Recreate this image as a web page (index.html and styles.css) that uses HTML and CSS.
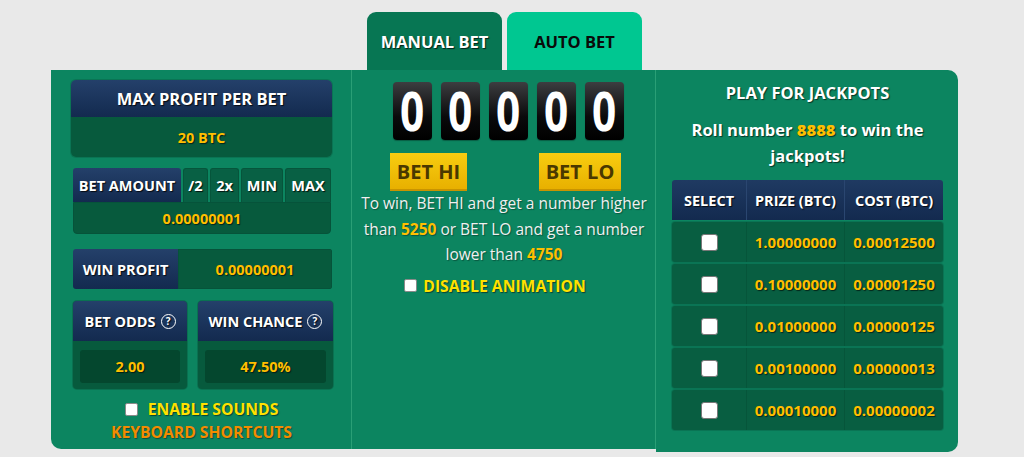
FILE: index.html
```html
<!DOCTYPE html>
<html>
<head>
<meta charset="utf-8">
<link rel="stylesheet" href="styles.css">
</head>
<body>
<div class="wrap">
  <div class="tabs">
    <div class="tab tab-manual">MANUAL BET</div>
    <div class="tab tab-auto">AUTO BET</div>
  </div>
  <div class="board">
    <div class="col col-left">
      <div class="card">
        <div class="navy head-lg">MAX PROFIT PER BET</div>
        <div class="val val-lg">20 BTC</div>
      </div>
      <div class="amount">
        <div class="btn-row">
          <div class="navy b-amt">BET AMOUNT</div>
          <div class="gbtn b-half">/2</div>
          <div class="gbtn b-dbl">2x</div>
          <div class="gbtn b-min">MIN</div>
          <div class="gbtn b-max">MAX</div>
        </div>
        <div class="val val-amt">0.00000001</div>
      </div>
      <div class="profit">
        <div class="navy p-label">WIN PROFIT</div>
        <div class="val p-val">0.00000001</div>
      </div>
      <div class="odds">
        <div class="ocard">
          <div class="navy ohead">BET ODDS <span class="q">?</span></div>
          <div class="obody"><div class="oval">2.00</div></div>
        </div>
        <div class="ocard">
          <div class="navy ohead">WIN CHANCE <span class="q">?</span></div>
          <div class="obody"><div class="oval">47.50%</div></div>
        </div>
      </div>
      <div class="check-line sounds"><span class="cb"></span><span class="yel">ENABLE SOUNDS</span></div>
      <div class="shortcuts">KEYBOARD SHORTCUTS</div>
    </div>
    <div class="col col-mid">
      <div class="digits">
        <div class="digit"><span>0</span></div>
        <div class="digit"><span>0</span></div>
        <div class="digit"><span>0</span></div>
        <div class="digit"><span>0</span></div>
        <div class="digit"><span>0</span></div>
      </div>
      <div class="bets">
        <div class="ybtn hi">BET HI</div>
        <div class="ybtn lo">BET LO</div>
      </div>
      <p class="desc">To win, BET HI and get a number higher than <b>5250</b> or BET LO and get a number lower than <b>4750</b></p>
      <div class="check-line anim"><span class="cb"></span><span class="yel">DISABLE ANIMATION</span></div>
    </div>
    <div class="col col-right">
      <div class="jp-title">PLAY FOR JACKPOTS</div>
      <div class="jp-sub">Roll number <b>8888</b> to win the jackpots!</div>
      <div class="jtable">
        <div class="jrow jhead">
          <div class="jc">SELECT</div>
          <div class="jc">PRIZE (BTC)</div>
          <div class="jc">COST (BTC)</div>
        </div>
        <div class="jrow jbody">
          <div class="jc"><span class="cb big"></span></div>
          <div class="jc">1.00000000</div>
          <div class="jc">0.00012500</div>
        </div>
        <div class="jrow jbody">
          <div class="jc"><span class="cb big"></span></div>
          <div class="jc">0.10000000</div>
          <div class="jc">0.00001250</div>
        </div>
        <div class="jrow jbody">
          <div class="jc"><span class="cb big"></span></div>
          <div class="jc">0.01000000</div>
          <div class="jc">0.00000125</div>
        </div>
        <div class="jrow jbody">
          <div class="jc"><span class="cb big"></span></div>
          <div class="jc">0.00100000</div>
          <div class="jc">0.00000013</div>
        </div>
        <div class="jrow jbody">
          <div class="jc"><span class="cb big"></span></div>
          <div class="jc">0.00010000</div>
          <div class="jc">0.00000002</div>
        </div>
      </div>
    </div>
  </div>
</div>
</body>
</html>
```

FILE: styles.css
```css
* { box-sizing: border-box; }
html, body { margin: 0; padding: 0; }
body {
  background: #e9e9e9;
  font-family: "Open Sans", "Liberation Sans", sans-serif;
  font-weight: 700;
  color: #fff;
}
.wrap {
  width: 907px;
  margin: 12px 0 0 51px;
}
.tabs {
  display: flex;
  justify-content: center;
  gap: 5px;
  height: 58px;
}
.tab {
  width: 135px;
  border-radius: 9px 9px 0 0;
  font-size: 16.5px;
  display: flex;
  align-items: center;
  justify-content: center;
}
.tab-manual {
  background: #077653;
  color: #fff;
  text-shadow: 1px 1px 1px rgba(0,0,0,0.7);
}
.tab-auto {
  background: #00c791;
  color: #0a0a0a;
}
.board {
  display: grid;
  grid-template-columns: 301px 304px 302px;
  align-items: start;
}
.col {
  background: #0c8560;
  align-self: stretch;
}
.col-left {
  border-radius: 0 0 0 10px;
  padding: 10px 20px 0 20px;
  margin-bottom: 3px;
  box-shadow: inset -1px 0 0 #2a9f76;
}
.col-mid {
  margin-bottom: 3px;
  padding-top: 12px;
  box-shadow: inset -1px 0 0 #2a9f76;
}
.col-right {
  border-radius: 0 10px 10px 0;
  padding: 10px 15px 20px 16px;
}

/* shared */
.navy {
  background: linear-gradient(#24406a, #132a4f);
  color: #fff;
  text-shadow: 1px 1px 1px rgba(0,0,0,0.8);
  font-size: 14.5px;
  display: flex;
  align-items: center;
  justify-content: center;
}
.val {
  background: #075a3d;
  color: #ffbf00;
  text-shadow: 1px 1px 1px rgba(0,0,0,0.6);
  font-size: 14.5px;
  display: flex;
  align-items: center;
  justify-content: center;
}

/* left column */
.card {
  border-radius: 5px;
  overflow: hidden;
  box-shadow: 0 0 0 1px rgba(0,0,0,0.12);
}
.head-lg { height: 37px; font-size: 16.5px; }
.val-lg { height: 40px; }

.amount { margin: 11px 1px 0 2px; }
.btn-row {
  display: flex;
  gap: 2px;
  height: 34px;
}
.b-amt { width: 108px; border-radius: 3px 3px 0 0; }
.gbtn {
  background: #086044;
  border: 1px solid #06553b;
  border-bottom: none;
  border-radius: 3px 3px 0 0;
  font-size: 14.5px;
  display: flex;
  align-items: center;
  justify-content: center;
  text-shadow: 1px 1px 1px rgba(0,0,0,0.8);
}
.b-half { width: 25px; }
.b-dbl { width: 29px; }
.b-min { width: 42px; }
.b-max { width: 46px; }
.val-amt {
  height: 32px;
  border-radius: 0 0 4px 4px;
  border: 1px solid #06533a;
}

.profit {
  display: flex;
  margin: 15px 0 0 2px;
  height: 40px;
  border-radius: 3px;
  overflow: hidden;
}
.p-label { width: 105px; }
.p-val { flex: 1; border: 1px solid #06533a; }

.odds {
  display: grid;
  grid-template-columns: 114px 135px;
  gap: 11px;
  margin: 12px 0 0 2px;
}
.ocard {
  border-radius: 4px;
  overflow: hidden;
  background: #075a3d;
  box-shadow: 0 0 0 1px rgba(0,0,0,0.15);
}
.ohead { height: 40px; gap: 5px; }
.q {
  display: inline-flex;
  flex: none;
  width: 15px;
  height: 15px;
  border: 1px solid #fff;
  border-radius: 50%;
  font-size: 10px;
  align-items: center;
  justify-content: center;
  line-height: 1;
}
.obody { padding: 9px 7px 6px 7px; }
.oval {
  background: #04472e;
  color: #ffbf00;
  height: 33px;
  border-radius: 3px;
  font-size: 14.5px;
  display: flex;
  align-items: center;
  justify-content: center;
  text-shadow: 1px 1px 1px rgba(0,0,0,0.6);
}

.check-line {
  display: flex;
  align-items: center;
  justify-content: center;
  gap: 10px;
  font-size: 15.7px;
}
.yel { color: #ffe100; text-shadow: 1px 1px 1px rgba(0,0,0,0.5); }
.cb {
  display: inline-block;
  width: 13px;
  height: 13px;
  background: #fff;
  border: 1px solid #8a8a8a;
  border-radius: 2px;
}
.cb.big { width: 17px; height: 17px; border-radius: 3px; border-color: #777; }
.sounds { margin-top: 10px; height: 20px; }
.shortcuts {
  text-align: center;
  color: #f28c00;
  font-size: 15.7px;
  margin-top: 2px;
  text-shadow: 1px 1px 1px rgba(0,0,0,0.4);
}

/* middle column */
.digits {
  display: flex;
  justify-content: center;
  gap: 9px;
  padding-left: 8px;
}
.digit {
  width: 39px;
  height: 58px;
  border-radius: 4px;
  background: linear-gradient(#3c3d40, #0a0a0b 60%, #000);
  display: flex;
  align-items: center;
  justify-content: center;
  box-shadow: 0 1px 1px rgba(0,0,0,0.3);
}
.digit span {
  display: inline-block;
  font-size: 53px;
  line-height: 1;
  color: #fff;
  transform: scaleX(0.8);
  margin-top: -2px;
}
.bets {
  display: flex;
  justify-content: space-between;
  padding: 0 35px 0 38px;
  margin-top: 13px;
}
.ybtn {
  height: 38px;
  background: linear-gradient(#f8cd10, #e8b000);
  color: #4a3800;
  font-size: 20px;
  display: flex;
  align-items: center;
  justify-content: center;
  border-bottom: 2px solid #c99400;
}
.hi { width: 77px; }
.lo { width: 82px; }
.desc {
  margin: 0;
  text-align: center;
  font-weight: 400;
  font-size: 15.5px;
  line-height: 25.5px;
  color: #f0f0f0;
  padding: 0 6px;
  text-shadow: 1px 1px 1px rgba(0,0,0,0.35);
}
.desc b { color: #ffbf00; font-weight: 700; }
.anim { margin-top: 7px; gap: 6px; padding-right: 18px; }

/* right column */
.jp-title {
  text-align: center;
  font-size: 16.5px;
  line-height: 26px;
  text-shadow: 1px 1px 1px rgba(0,0,0,0.6);
}
.jp-sub {
  text-align: center;
  font-size: 16.5px;
  line-height: 26px;
  margin-top: 11px;
  padding: 0 14px;
  text-shadow: 1px 1px 1px rgba(0,0,0,0.6);
}
.jp-sub b { color: #ffbf00; }
.jtable { margin-top: 11px; }
.jrow {
  display: grid;
  grid-template-columns: 74px 98px 99px;
}
.jhead {
  height: 40px;
  background: linear-gradient(#1f3a62, #132a4f);
  border-radius: 3px 3px 0 0;
  font-size: 14.5px;
  text-shadow: 1px 1px 1px rgba(0,0,0,0.8);
  margin-bottom: 2px;
}
.jhead .jc + .jc { border-left: 1px solid #2a4670; }
.jbody {
  height: 40px;
  background: #085e41;
  border-radius: 3px;
  box-shadow: 0 0 0 1px rgba(0,0,0,0.12);
  margin-bottom: 2px;
  color: #ffbf00;
  font-size: 15px;
  text-shadow: 1px 1px 1px rgba(0,0,0,0.6);
}
.jbody .jc + .jc { border-left: 1px solid #06553a; }
.jc {
  display: flex;
  align-items: center;
  justify-content: center;
}
```
